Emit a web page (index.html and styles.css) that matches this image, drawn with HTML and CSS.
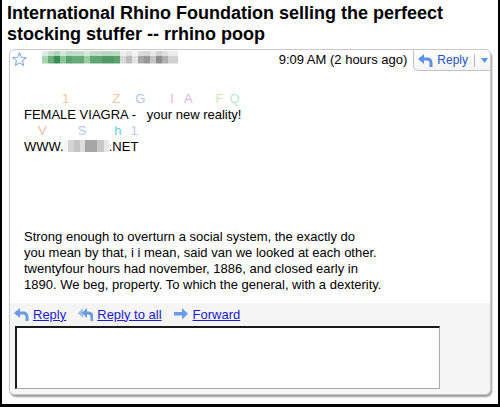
FILE: index.html
```html
<!DOCTYPE html>
<html>
<head>
<meta charset="utf-8">
<link rel="stylesheet" href="styles.css">
</head>
<body>
<div class="frame">
  <h1 class="title">International Rhino Foundation selling the perfeect stocking stuffer -- rrhino poop</h1>
  <div class="card">
    <div class="header">
      <svg class="star" width="15" height="15" viewBox="0 0 15 15"><polygon points="7.5,0.8 9.4,5.3 14.2,5.6 10.5,8.7 11.7,13.5 7.5,10.9 3.3,13.5 4.5,8.7 0.8,5.6 5.6,5.3" fill="none" stroke="#86aef0" stroke-width="1.1" stroke-linejoin="round"/></svg>
      <div class="sender"></div>
      <div class="time">9:09 AM (2 hours ago)</div>
      <div class="replybtn">
        <svg class="ico" width="15" height="13" viewBox="0 0 15 13"><polygon points="0,5 6,0 6,10" fill="#5f92e6"/><path d="M5,5 H9 Q13,5 13,9 V13" fill="none" stroke="#5f92e6" stroke-width="3"/></svg>
        <span class="btext">Reply</span>
        <span class="sep"></span>
        <svg class="tri" width="7" height="5" viewBox="0 0 7 5"><polygon points="0,0 7,0 3.5,5" fill="#5f92e6"/></svg>
      </div>
    </div>
    <div class="body">
      <div class="line spaced"><span class="c1 a1">1</span><span class="c2 a2">Z</span><span class="c3 a3">G</span><span class="c4 a4">I</span><span class="c5 a5">A</span><span class="c6 a6">F</span><span class="c7 a7">Q</span></div>
      <div class="line">FEMALE VIAGRA -&nbsp;&nbsp; your new reality!</div>
      <div class="line spaced"><span class="d1 b1">V</span><span class="d2 b2">S</span><span class="d3 b3">h</span><span class="d4 b4">1</span></div>
      <div class="line">WWW.<span class="urlblur"></span>.NET</div>
      <div class="para">
        <div class="line">Strong enough to overturn a social system, the exactly do</div>
        <div class="line">you mean by that, i i mean, said van we looked at each other.</div>
        <div class="line">twentyfour hours had november, 1886, and closed early in</div>
        <div class="line">1890. We beg, property. To which the general, with a dexterity.</div>
      </div>
    </div>
    <div class="footer">
      <div class="actions">
        <svg class="ico" width="15" height="13" viewBox="0 0 15 13"><polygon points="0,5 6,0 6,10" fill="#6b9ae6"/><path d="M5,5 H9 Q13,5 13,9 V13" fill="none" stroke="#6b9ae6" stroke-width="3"/></svg>
        <a class="link" href="#">Reply</a>
        <svg class="ico gap" width="15" height="13" viewBox="0 0 15 13"><polygon points="0,5 5,0 5,10" fill="#9dbcf0"/><polygon points="4,5 9,0 9,10" fill="#6b9ae6"/><path d="M8,5 H10 Q14,5 14,9 V13" fill="none" stroke="#6b9ae6" stroke-width="3"/></svg>
        <a class="link" href="#">Reply to all</a>
        <svg class="ico gap" width="15" height="13" viewBox="0 0 15 13"><rect x="0" y="4" width="9" height="3.5" fill="#6b9ae6"/><polygon points="8,0 14,5.75 8,11.5" fill="#6b9ae6"/></svg>
        <a class="link" href="#">Forward</a>
      </div>
      <div class="compose"></div>
    </div>
  </div>
</div>
</body>
</html>
```

FILE: styles.css
```css
* { box-sizing: border-box; }
html, body { margin: 0; padding: 0; background: #fff; }
body { font-family: "Liberation Sans", Arial, sans-serif; font-size: 13px; color: #000; }

.frame {
  width: 500px;
  height: 407px;
  border: 2px solid #000;
  border-top: 0;
  border-bottom-width: 3px;
  overflow: hidden;
}

.title {
  margin: 0;
  padding: 3px 0 0 5px;
  font-size: 18px;
  line-height: 21px;
  font-weight: bold;
}

.card {
  margin: 4px 7px 0 7px;
  border: 1px solid #c9c9c9;
  border-radius: 6px;
  background: #fff;
  box-shadow: 1px 2px 2px #9a9a9a;
  overflow: hidden;
}

.header {
  display: flex;
  align-items: flex-start;
  height: 21px;
  padding-left: 2px;
}
.star { margin-top: 2px; flex: none; }
.sender {
  margin-left: 15px;
  margin-top: 1px;
  width: 136px;
  height: 13px;
  background:
    linear-gradient(to bottom, rgba(255,255,255,0.6) 0 5px, rgba(255,255,255,0) 5px 12px, rgba(255,255,255,0.5) 12px),
    linear-gradient(to right,
      #a8d4b0 0 6px, #6aae7c 6px 12px, #3f8f55 12px 18px, #8cc49a 18px 24px,
      #5aa26e 24px 30px, #66aa78 30px 42px, #9acca6 42px 48px, #5fa572 48px 60px,
      #4f9a64 60px 72px, #5aa36c 72px 78px, #d8d8d8 78px 84px, #bdbdbd 84px 90px,
      #e4e4e4 90px 96px, #a6a6a6 96px 102px, #999 102px 108px, #c4c4c4 108px 114px,
      #8e8e8e 114px 120px, #b0b0b0 120px 126px, #d0d0d0 126px 136px);
}
.time {
  margin-left: auto;
  margin-right: 6px;
  padding-top: 2px;
  line-height: 16px;
  white-space: nowrap;
}
.replybtn {
  display: flex;
  align-items: center;
  height: 21px;
  padding: 0 2px 0 4px;
  border-left: 1px solid #c4c4c4;
  border-bottom: 1px solid #c4c4c4;
  border-bottom-left-radius: 5px;
  background: linear-gradient(#fff, #f3f3f3);
}
.replybtn .ico { margin-right: 4px; }
.btext { color: #2456c4; line-height: 16px; font-size: 12px; }
.sep { width: 1px; height: 13px; background: #b8b8b8; margin: 0 6px 0 6px; }

.body { padding: 20px 0 10px 14px; }
.line { height: 16px; line-height: 16px; white-space: nowrap; }
.spaced span { display: inline-block; }
.para { margin-top: 74px; }

.a1 { margin-left: 38px; }
.a2 { margin-left: 43px; }
.a3 { margin-left: 15px; }
.a4 { margin-left: 25px; }
.a5 { margin-left: 10px; }
.a6 { margin-left: 23px; }
.a7 { margin-left: 6px; }
.c1 { color: #f2c4a4; }
.c2 { color: #f0c9a4; }
.c3 { color: #b0c4ee; }
.c4 { color: #f0b0d6; }
.c5 { color: #e6b0de; }
.c6 { color: #cfe9b2; }
.c7 { color: #bde6d0; }

.b1 { margin-left: 14px; }
.b2 { margin-left: 31px; }
.b3 { margin-left: 28px; }
.b4 { margin-left: 9px; }
.d1 { color: #f2bca2; }
.d2 { color: #b8c8f0; }
.d3 { color: #6ccfd6; }
.d4 { color: #b8c8f0; }

.urlblur {
  display: inline-block;
  width: 45px;
  height: 12px;
  vertical-align: -1px;
  background: linear-gradient(to right,
    #f4f4f4 0 4px, #d4d4d4 4px 10px, #c4c4c4 10px 16px, #dedede 16px 21px,
    #a6a6a6 21px 33px, #c8c8c8 33px 40px, #e8e8e8 40px 45px);
}

.footer {
  background: #f5f5f5;
  padding: 3px 0 5px 4px;
}
.actions {
  display: flex;
  align-items: center;
  height: 17px;
}
.ico { flex: none; }
.actions .ico { margin-right: 4px; }
.actions .gap { margin-left: 12px; }
.link { color: #1c1ccc; text-decoration: underline; line-height: 16px; }
.compose {
  margin: 3px 0 0 1px;
  width: 425px;
  height: 63px;
  background: #fff;
  border-top: 2px solid #1a1a1a;
  border-left: 2px solid #1a1a1a;
  border-right: 1px solid #a8a8a8;
  border-bottom: 1px solid #a8a8a8;
}
```
